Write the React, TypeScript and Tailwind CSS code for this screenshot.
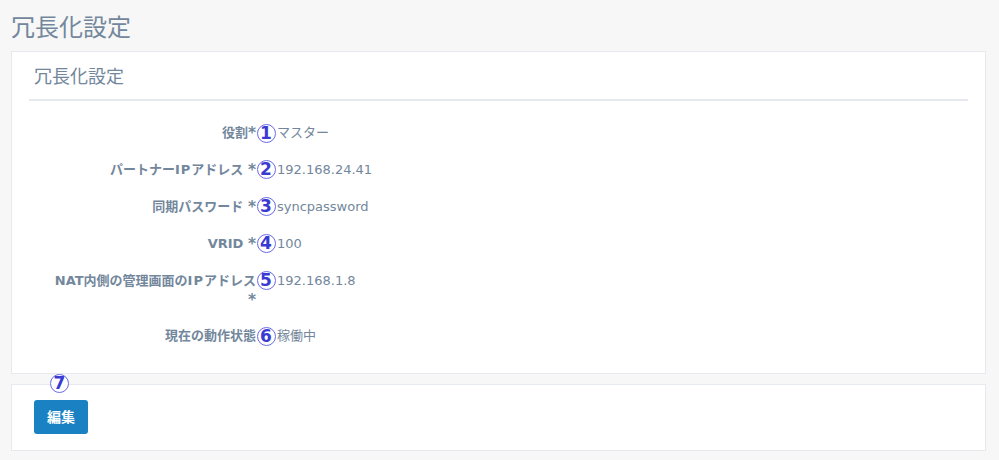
const font = {
  fontFamily: '"DejaVu Sans", "Noto Sans CJK JP", sans-serif',
};

const rows = [
  { label: "役割", gap: false, num: 1, value: "マスター" },
  { label: "パートナーIPアドレス", gap: true, num: 2, value: "192.168.24.41" },
  { label: "同期パスワード", gap: true, num: 3, value: "syncpassword" },
  { label: "VRID", gap: true, num: 4, value: "100" },
  { label: "NAT内側の管理画面のIPアドレス", gap: true, num: 5, value: "192.168.1.8" },
  { label: "現在の動作状態", gap: false, num: 6, value: "稼働中", noStar: true },
];

const Mark = ({ n }: { n: number }) => (
  <span className="flex h-[19px] w-[19px] shrink-0 items-center justify-center rounded-full border border-[#6a6ae8] bg-white text-[17px] leading-none font-bold text-[#3a3ad2]">
    {n}
  </span>
);

const Label = ({ text }: { text: string }) => {
  const parts = text.split("IP");
  if (parts.length === 1) return <>{text}</>;
  return (
    <>
      {parts[0]}
      <span className="tracking-[1px]">IP</span>
      {parts[1]}
    </>
  );
};

export default function App() {
  return (
    <div
      style={font}
      className="h-[460px] w-[999px] overflow-hidden bg-[#f7f7f7] pr-[13px] pl-[11px] text-[13px] leading-[18.57px] text-[#73879c]"
    >
      <h3 className="flex h-[51px] items-center pt-[4px] pb-0 text-[24px] leading-[26px] font-normal">
        冗長化設定
      </h3>

      <div className="h-[323px] border border-[#e6e9ed] bg-white px-[17px] pt-[10px]">
        <div className="mb-[23px] h-[39px] border-b-2 border-[#e6e9ed] pl-[5px]">
          <h2 className="pt-[3px] text-[18px] leading-[24px] font-normal">冗長化設定</h2>
        </div>

        <div className="flex flex-col gap-[18.43px]">
          {rows.map((r) => (
            <div key={r.num} className="flex items-start">
              <label className="ml-[21px] w-[206px] shrink-0 text-right font-bold">
                <Label text={r.label} />
                {r.gap ? " " : ""}
                {!r.noStar && <span className="relative top-[1px] text-[15.5px] leading-none">*</span>}
              </label>
              <div className="-mt-[0.5px] -mb-[1px] pl-[0.5px]">
                <Mark n={r.num} />
              </div>
              <span className="pl-[1.5px]">{r.value}</span>
            </div>
          ))}
        </div>
      </div>

      <div className="relative mt-[10px] h-[67px] border border-[#e6e9ed] bg-white px-[22px] pt-[15px]">
        <span className="absolute top-[-11px] left-[38px]">
          <Mark n={7} />
        </span>
        <button className="h-[34px] w-[54px] rounded-[3px] bg-[#1a82c3] text-[14px] font-bold text-white">
          編集
        </button>
      </div>
    </div>
  );
}
